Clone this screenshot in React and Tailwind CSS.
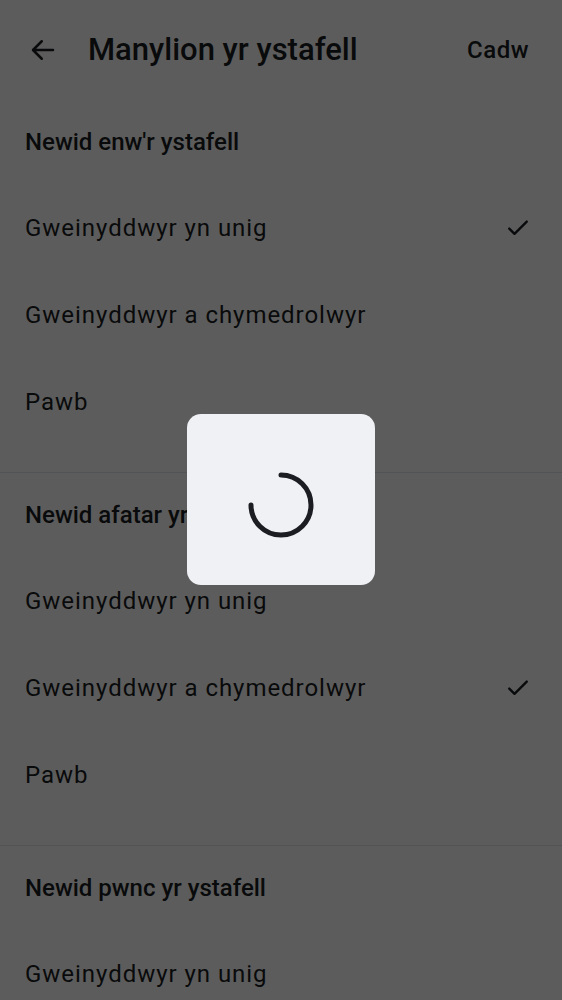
import React from "react";

const sections = [
  { title: "Newid enw'r ystafell", selected: 0 },
  { title: "Newid afatar yr ystafell", selected: 1 },
  { title: "Newid pwnc yr ystafell", selected: -1 },
];

const options = ["Gweinyddwyr yn unig", "Gweinyddwyr a chymedrolwyr", "Pawb"];

function Check() {
  return (
    <svg width="28" height="28" viewBox="0 0 24 24" fill="none">
      <path d="M4.5 12.5l4.5 4.5 10.5-10.5" stroke="#1b1d22" strokeWidth="2" strokeLinecap="round" strokeLinejoin="round" />
    </svg>
  );
}

function Section({ title, selected, last }) {
  return (
    <div className={"pb-[27px] " + (last ? "" : "border-b border-[#e3e5e8]")}>
      <div className="h-[84px] flex items-center px-[25px] text-[24px] font-medium text-[#1b1d22]">
        {title}
      </div>
      {options.map((o, i) => (
        <div key={o} className="h-[87px] flex items-center justify-between px-[25px] pr-[30px] text-[24px] tracking-[0.96px] text-[#1b1d22]">
          <span>{o}</span>
          {i === selected && <Check />}
        </div>
      ))}
    </div>
  );
}

export default function App() {
  return (
    <div className="relative w-[562px] h-[1000px] overflow-hidden bg-white" style={{ fontFamily: "Roboto, sans-serif" }}>
      <div className="h-[100px] flex items-center pl-[28px] pr-[33px]">
        <svg width="30" height="30" viewBox="0 0 24 24" fill="none">
          <path d="M20 12H4.5M11 5l-7 7 7 7" stroke="#1b1d22" strokeWidth="2" strokeLinecap="round" strokeLinejoin="round" />
        </svg>
        <h1 className="ml-[30px] text-[31px] font-medium text-[#1b1d22] flex-1">Manylion yr ystafell</h1>
        <button className="text-[24px] font-medium tracking-[0.5px] text-[#1b1d22]">Cadw</button>
      </div>
      {sections.map((s, i) => (
        <Section key={s.title} {...s} last={i === sections.length - 1} />
      ))}

      {/* loading overlay */}
      <div className="absolute inset-0 bg-black/[0.64] flex items-center justify-center">
        <div className="w-[188px] h-[171px] mt-[-1px] rounded-[14px] bg-[#f0f1f5] flex items-center justify-center">
          <svg width="70" height="70" viewBox="0 0 70 70" fill="none" className="mt-[11px]">
            <path d="M35 5 A30 30 0 1 1 5 35" stroke="#1b1d22" strokeWidth="5" strokeLinecap="round" />
          </svg>
        </div>
      </div>
    </div>
  );
}
